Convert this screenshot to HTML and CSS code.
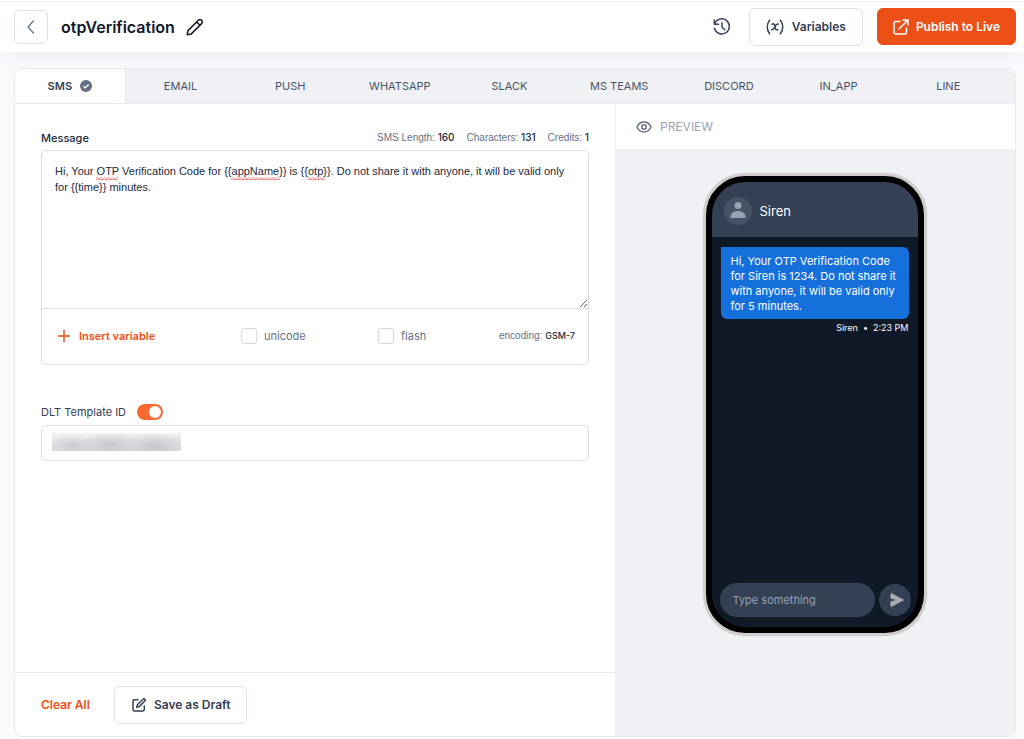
FILE: index.html
```html
<!DOCTYPE html>
<html lang="en">
<head>
<meta charset="utf-8">
<meta name="viewport" content="width=device-width, initial-scale=1">
<title>otpVerification</title>
<link rel="stylesheet" href="styles.css">
</head>
<body>
<header class="topbar">
  <button class="btn back" type="button" aria-label="Back">
    <svg width="20" height="20" viewBox="0 0 20 20" class="stroke"><path d="M12.5 4 7 10l5.500 6"/></svg>
  </button>
  <h1 class="title">otpVerification</h1>
  <button class="icon-btn" type="button" aria-label="Rename">
    <svg width="18" height="18" viewBox="0 0 18 18" class="stroke ink"><path d="M2 12.600 12.300 2.300a2.300 2.300 0 0 1 3.300 3.300L5.300 15.900 1.200 16.700zM10.600 4l3.300 3.300"/></svg>
  </button>
  <div class="actions">
    <button class="icon-btn" type="button" aria-label="History">
      <svg width="18" height="18" viewBox="0 0 18 18" class="stroke slate"><path d="M1.300 2v4.300h4.300M1.500 6.100A7.600 7.600 0 1 1 1.400 10.300M9 4.800V9.300l2.700 2.300"/></svg>
    </button>
    <button class="btn variables" type="button">
      <svg width="18" height="16" viewBox="0 0 18 16" class="stroke slate-dark"><path d="M3.600 1.200C.500 5 .500 11 3.600 14.800M14.400 1.200c3.100 3.800 3.100 9.800 0 13.600M6 5.200c2.200-1 2.600.3 3 2.600s.9 3.700 2.800 2.700M12.300 5c-2-.4-2.800 1.600-3.600 3.100S7.200 11.300 5.500 10.600"/></svg>
      Variables
    </button>
    <button class="btn publish" type="button">
      <svg width="16" height="16" viewBox="0 0 16 16" class="stroke"><path d="M7 2.500H2.800A1.700 1.700 0 0 0 1.100 4.200v9A1.700 1.700 0 0 0 2.800 14.900h9a1.700 1.700 0 0 0 1.700-1.700V9M10 1h5v5M15 1 6 10"/></svg>
      Publish to Live
    </button>
  </div>
</header>
<main class="card">
  <nav class="tabs" aria-label="Channels">
    <a class="tab active" href="#sms" aria-current="page">SMS
      <svg width="12" height="12" viewBox="0 0 12 12"><circle cx="6" cy="6" r="6" fill="#667085"/><path d="M3.500 6.200 5.300 7.900 8.600 4.500" fill="none" stroke="#fff" stroke-width="1.300"/></svg>
    </a>
    <a class="tab" href="#email">EMAIL</a>
    <a class="tab" href="#push">PUSH</a>
    <a class="tab" href="#whatsapp">WHATSAPP</a>
    <a class="tab" href="#slack">SLACK</a>
    <a class="tab" href="#msteams">MS TEAMS</a>
    <a class="tab" href="#discord">DISCORD</a>
    <a class="tab" href="#inapp">IN_APP</a>
    <a class="tab" href="#line">LINE</a>
  </nav>
  <div class="columns">
    <section class="editor">
      <div class="form">
        <div class="field-head">
          <label class="label" for="message">Message</label>
          <div class="stats"><span>SMS Length: <b>160</b></span><span>Characters: <b>131</b></span><span>Credits: <b>1</b></span></div>
        </div>
        <div class="box">
          <div class="compose">
            <textarea id="message" class="message" spellcheck="false">Hi, Your OTP Verification Code for {{appName}} is {{otp}}. Do not share it with anyone, it will be valid only for {{time}} minutes.</textarea>
            <svg class="squiggles" width="320" height="32" aria-hidden="true">
              <defs><pattern id="wave" width="4" height="3" patternUnits="userSpaceOnUse"><path d="M-1 3 1 .5 3 2.500 5 0" fill="none" stroke="#f0443c"/></pattern></defs>
              <rect x="54" y="26" width="22" height="3" fill="url(#wave)"/>
              <rect x="189" y="26" width="49" height="3" fill="url(#wave)"/>
              <rect x="266" y="26" width="17" height="3" fill="url(#wave)"/>
            </svg>
          </div>
          <div class="tools">
            <button class="link-btn insert" type="button">
              <svg width="12" height="12" viewBox="0 0 12 12" class="stroke"><path d="M6 0v12M0 6h12"/></svg>
              Insert variable
            </button>
            <label class="check"><input type="checkbox">unicode</label>
            <label class="check"><input type="checkbox">flash</label>
            <span class="encoding">encoding: <b>GSM-7</b></span>
          </div>
        </div>
        <div class="dlt-head">
          <label for="dlt">DLT Template ID</label>
          <input class="switch" type="checkbox" role="switch" aria-label="Use DLT Template ID" checked>
        </div>
        <div class="dlt-box">
          <span class="redacted"></span>
          <input id="dlt" class="dlt-input" type="text">
        </div>
      </div>
      <footer class="foot">
        <button class="link-btn" type="button">Clear All</button>
        <button class="btn draft" type="button">
          <svg width="14" height="14" viewBox="0 0 14 14" class="stroke slate-dark"><path d="M6 1.700H2.400A1.400 1.400 0 0 0 1 3.100v8.500A1.400 1.400 0 0 0 2.400 13h8.500a1.400 1.400 0 0 0 1.400-1.400V8M4.800 9.200l.6-2.400L11 1.200a1.250 1.250 0 0 1 1.800 1.800L7.200 8.600z"/></svg>
          Save as Draft
        </button>
      </footer>
    </section>
    <aside class="preview">
      <h2 class="preview-head">
        <svg width="16" height="12" viewBox="0 0 16 12" class="stroke"><path d="M1 6c3-6.600 11-6.600 14 0-3 6.600-11 6.600-14 0z"/><circle cx="8" cy="6" r="2.200"/></svg>
        PREVIEW
      </h2>
      <div class="stage">
        <div class="phone">
          <div class="screen">
            <div class="chat-head">
              <svg width="28" height="28" viewBox="0 0 28 28"><circle cx="14" cy="14" r="14" fill="#475467"/><circle cx="14" cy="8.500" r="3.500" fill="#98a2b3"/><path d="M6.500 21v-1c0-8 15-8 15 0v1z" fill="#98a2b3"/></svg>
              Siren
            </div>
            <div class="chat">
              <p class="bubble">Hi, Your OTP Verification Code for Siren is 1234. Do not share it with anyone, it will be valid only for 5 minutes.</p>
              <p class="meta"><span>Siren</span><span>•</span><span>2:23 PM</span></p>
            </div>
            <div class="reply">
              <input class="reply-input" type="text" placeholder="Type something" aria-label="Type something">
              <button class="send" type="button" aria-label="Send">
                <svg width="14" height="14" viewBox="0 0 14 14"><path d="M1 .5 13.500 7 1 13.500V8.700L8.500 7 1 5.300z" fill="#aaabb0" stroke="#aaabb0" stroke-linejoin="round"/></svg>
              </button>
            </div>
          </div>
        </div>
      </div>
    </aside>
  </div>
</main>
</body>
</html>
```
FILE: styles.css
```css
* { box-sizing: border-box; }
body {
  margin: 0;
  min-height: 100vh;
  display: flex;
  flex-direction: column;
  background: #f9fafc;
  color: #344054;
  font: 11px/16px Inter, "Liberation Sans", sans-serif;
}
h1, h2, p { margin: 0; }
button, input, textarea { font: inherit; color: inherit; }
button { cursor: pointer; }
b { font-weight: 500; color: #1d2939; }
svg { flex: none; display: block; }
.stroke { fill: none; stroke: currentColor; stroke-width: 1.5; stroke-linecap: round; stroke-linejoin: round; }
.ink { color: #101828; }
.slate { color: #3f4565; }
.slate-dark { color: #344054; }

.topbar {
  display: flex;
  align-items: center;
  height: 52px;
  padding: 1px 8px 0 14px;
  background: linear-gradient(#fff 1px, #eaecf0 1px, #eaecf0 2px, #fff 2px);
  box-shadow: 0 4px 16px #eef0fa;
}
.btn {
  display: flex;
  align-items: center;
  justify-content: center;
  gap: 8px;
  height: 38px;
  padding: 0 16px;
  border: 1px solid #dcdfe8;
  border-radius: 6px;
  background: #fff;
  color: #344054;
  font-size: 12px;
  font-weight: 600;
}
.back { width: 34px; height: 34px; padding: 0; color: #667085; }
.back .stroke { stroke-width: 1.2; }
.title { margin: 0 11px 0 13px; font-size: 16px; line-height: 24px; font-weight: 600; color: #101828; }
.icon-btn { padding: 0; border: 0; background: none; }
.actions { display: flex; align-items: center; gap: 14px; margin-left: auto; }
.actions .icon-btn { margin-right: 4px; }
.publish { height: 37px; padding: 0 15px; gap: 7px; border-color: #ec5017; background: #ec5017; color: #fff; }

.card {
  flex: 1;
  display: flex;
  flex-direction: column;
  margin: 16px 8px 2px 14px;
  border: 1px solid #e7e9ee;
  border-radius: 8px;
  background: #fff;
  overflow: hidden;
}
.tabs { display: flex; padding-right: 12px; background: #f0f1f5; border-bottom: 1px solid #e7eaf0; }
.tab {
  flex: 1 1 0;
  display: flex;
  align-items: center;
  justify-content: center;
  gap: 8px;
  height: 34px;
  color: #475467;
  text-decoration: none;
}
.tab.active { background: #fff; border-right: 1px solid #e7e9ee; font-weight: 600; color: #344054; }

.columns { flex: 1; display: grid; grid-template-columns: 3fr 2fr; }
.editor { display: flex; flex-direction: column; min-width: 0; }
.form { flex: 1; padding: 24px 26px; }
.field-head { display: flex; justify-content: space-between; align-items: center; height: 22px; padding-bottom: 4px; }
.label { font-weight: 500; color: #1d2939; padding-top: 2px; }
.stats { display: flex; gap: 12px; }
.stats, .encoding { font-family: "Liberation Sans", sans-serif; font-size: 10px; color: #667085; }
.stats b { font-family: Inter, sans-serif; }
.encoding b { font-family: Inter, sans-serif; font-size: 9px; }
.box { border: 1px solid #d9dce6; border-radius: 5px; }
.compose { display: grid; height: 157px; }
.message {
  grid-area: 1 / 1;
  margin: 0;
  padding: 12px 13px;
  border: 0;
  background: transparent;
  color: #1d2939;
  font: 11px/16px "Liberation Sans", sans-serif;
  resize: vertical;
  outline: 0;
}
.squiggles { grid-area: 1 / 1; pointer-events: none; }
.tools {
  display: grid;
  grid-template-columns: 183px 137px 1fr auto;
  align-items: center;
  height: 56px;
  padding: 0 13px 2px 16px;
  border-top: 1px solid #d9dce6;
}
.link-btn { display: flex; align-items: center; gap: 9px; padding: 0; border: 0; background: none; color: #f04e12; font-weight: 600; }
.check { display: flex; align-items: center; gap: 7px; color: #667085; }
.check input { appearance: none; width: 16px; height: 16px; margin: 0; border: 1px solid #d5d9e4; border-radius: 3px; }
.check input:checked { background: #f96a30; }

.dlt-head { display: flex; align-items: center; gap: 11px; margin: 38px 0 4px; height: 18px; }
.switch { appearance: none; display: flex; width: 26px; height: 16px; margin: 0; padding: 2px; border-radius: 8px; background: #d0d5dd; }
.switch::before { content: ""; width: 12px; height: 12px; border-radius: 50%; background: #fff; }
.switch:checked { justify-content: flex-end; background: #f96a30; }
.dlt-box { display: grid; align-items: center; height: 36px; border: 1px solid #d9dce6; border-radius: 5px; }
.redacted {
  grid-area: 1 / 1;
  width: 129px;
  height: 18px;
  margin-left: 10px;
  margin-bottom: 3px;
  background:
    radial-gradient(ellipse 28px 11px at 22px 13px, #cbcccf, transparent),
    radial-gradient(ellipse 30px 13px at 58px 12px, #c6c7ca, transparent),
    radial-gradient(ellipse 38px 13px at 103px 13px, #c6c7ca, transparent),
    linear-gradient(#f0f1f2, #dcdee1);
}
.dlt-input { grid-area: 1 / 1; width: 100%; height: 34px; padding: 0 12px; border: 0; background: none; outline: 0; }
.foot { display: flex; align-items: center; gap: 24px; height: 64px; padding: 0 26px; border-top: 1px solid #e7e9ee; }
.foot .link-btn { font-size: 12px; }
.draft { padding: 0 15px 0 17px; }

.preview { display: flex; flex-direction: column; border-left: 1px solid #eff0f4; background: #f0f1f5; }
.preview-head {
  display: flex;
  align-items: center;
  gap: 8px;
  height: 45px;
  padding-left: 20px;
  background: #fff;
  color: #98a2b3;
  font-size: 12px;
  font-weight: 400;
}
.preview-head svg { color: #667085; }
.stage { flex: 1; display: flex; justify-content: center; align-items: flex-start; padding: 24px 2px 0 0; }
.phone {
  width: 224px;
  padding: 6px;
  border: 3px solid #cfcecd;
  border-radius: 42px;
  background: #000;
  box-shadow: 0 0 0 1px #e9e9eb;
}
.screen { display: flex; flex-direction: column; height: 445px; border-radius: 33px; background: #101928; overflow: hidden; }
.chat-head { display: flex; align-items: center; gap: 8px; height: 55px; padding: 2px 12px 0; background: #344054; color: #fff; font-size: 13px; }
.chat { flex: 1; padding: 10px 9px; color: #fff; }
.bubble { padding: 7px 10px 5px; border-radius: 0 6px 6px 6px; background: #1670dc; line-height: 15px; }
.meta { display: flex; justify-content: flex-end; gap: 5px; padding-top: 1px; font-size: 9px; }
.reply { display: flex; align-items: center; gap: 4px; padding: 0 7px 10px 8px; }
.reply-input { flex: 1; min-width: 0; height: 34px; padding: 0 13px; border: 0; border-radius: 17px; background: #344054; color: #fff; }
.reply-input::placeholder { color: #98a2b3; opacity: 1; }
.send { display: grid; place-items: center; width: 32px; height: 32px; padding: 0 0 0 4px; border: 0; border-radius: 50%; background: #344054; }
```
